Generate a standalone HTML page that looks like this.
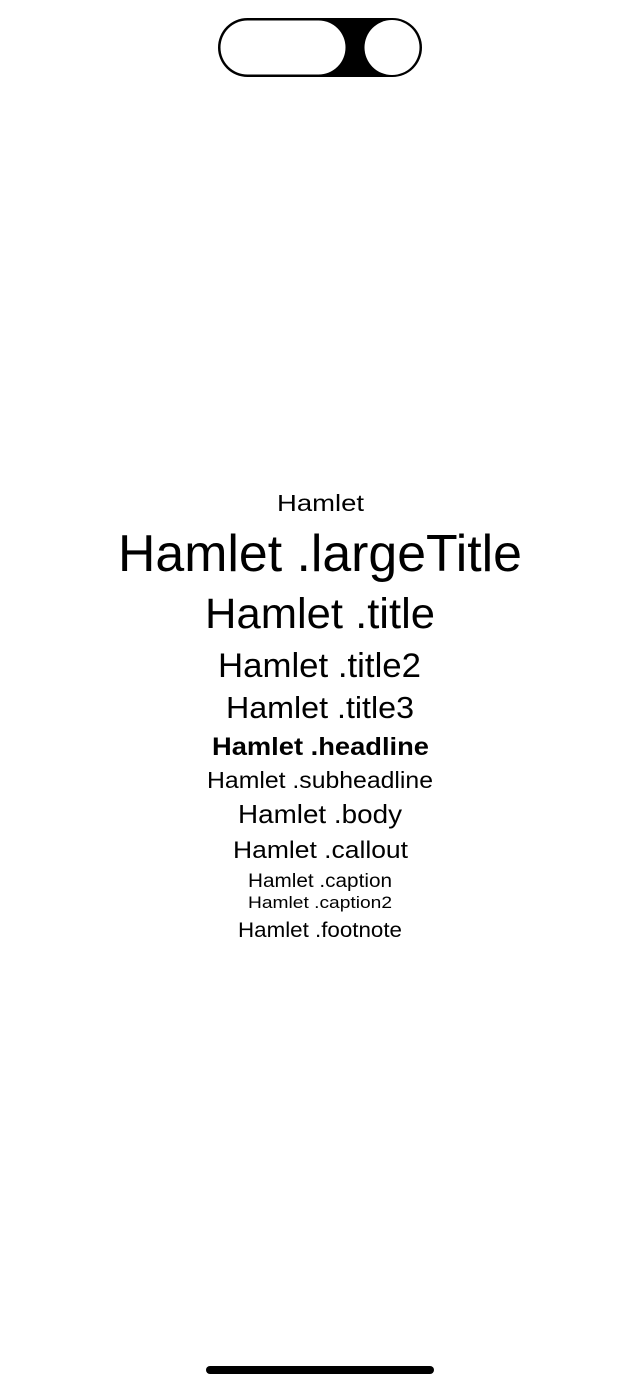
<!DOCTYPE html>
<html><head><meta charset="utf-8"><style>
html,body{margin:0;padding:0;background:#fff;width:640px;height:1387px;overflow:hidden}
svg{display:block}
text{font-family:"Liberation Sans",sans-serif;fill:#000}
</style></head><body>
<svg width="640" height="1387" viewBox="0 0 640 1387">
<rect x="218" y="18" width="204" height="59" rx="29.5" fill="#000"/>
<rect x="220.5" y="20.5" width="125" height="54" rx="27" fill="#fff"/>
<circle cx="392" cy="47.5" r="27.5" fill="#fff"/>
<g text-anchor="start">
<text x="277" y="511" font-size="23" textLength="87" lengthAdjust="spacingAndGlyphs">Hamlet</text>
<text x="118" y="571" font-size="52" textLength="404" lengthAdjust="spacingAndGlyphs">Hamlet .largeTitle</text>
<text x="205" y="628" font-size="43" textLength="230" lengthAdjust="spacingAndGlyphs">Hamlet .title</text>
<text x="218" y="677" font-size="34" textLength="203" lengthAdjust="spacingAndGlyphs">Hamlet .title2</text>
<text x="226" y="718" font-size="31" textLength="188" lengthAdjust="spacingAndGlyphs">Hamlet .title3</text>
<text x="212" y="755" font-size="25" font-weight="bold" textLength="217" lengthAdjust="spacingAndGlyphs">Hamlet .headline</text>
<text x="207" y="788" font-size="23" textLength="226" lengthAdjust="spacingAndGlyphs">Hamlet .subheadline</text>
<text x="238" y="823" font-size="26" textLength="164" lengthAdjust="spacingAndGlyphs">Hamlet .body</text>
<text x="233" y="858" font-size="24" textLength="175" lengthAdjust="spacingAndGlyphs">Hamlet .callout</text>
<text x="248" y="887" font-size="19" textLength="144" lengthAdjust="spacingAndGlyphs">Hamlet .caption</text>
<text x="248" y="908" font-size="17" textLength="144" lengthAdjust="spacingAndGlyphs">Hamlet .caption2</text>
<text x="238" y="937" font-size="21" textLength="164" lengthAdjust="spacingAndGlyphs">Hamlet .footnote</text>
</g>
<rect x="206" y="1366" width="228" height="8" rx="4" fill="#000"/>
</svg>
</body></html>
